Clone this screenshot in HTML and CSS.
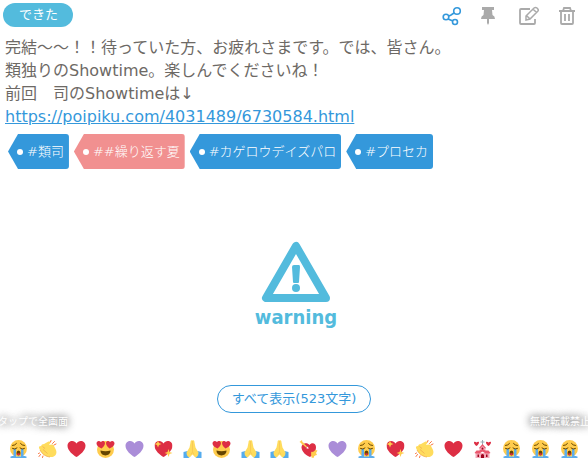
FILE: index.html
```
<!DOCTYPE html>
<html lang="ja">
<head>
    <meta charset="UTF-8">
    <meta name="viewport" content="width=device-width, initial-scale=1.0">
    <title>類独りのShowtime</title>
    <link rel="stylesheet" href="styles.css">
</head>
<body>
    <!-- Icon shapes -->
    <svg class="sprite" aria-hidden="true">
        <symbol id="cry" viewBox="0 0 36 36">
            <circle cx="18" cy="17" r="17" fill="#ffcc4d"/>
            <path d="M2 33h32v3H2zM8 18h5v17H2c0-3 3-3 6-3zM23 18h5v14c3 0 6 0 6 3H23z" fill="#5dadec"/>
            <ellipse cx="18" cy="26" rx="4" ry="5" fill="#664500"/>
            <path d="M14 28q4-3 8 0-4 5-8 0z" fill="#dd2e44"/>
            <path d="M6 17q5 3 9-1M30 17q-5 3-9-1M6 11q5 0 8-4M30 11q-5 0-8-4" fill="none" stroke="#664500" stroke-width="2" stroke-linecap="round"/>
        </symbol>
        <symbol id="clap" viewBox="0 0 36 36">
            <path d="M1 16q-1-4 4-4l2-3 4-1 9-5q4-1 4 2l-3 5 5-1q4-1 5 3l4 8c3 8-2 15-12 14C13 34 5 26 1 16z" fill="#ffdc5d"/>
            <path d="M3 20c5 9 12 13 20 14M9 19l9 8M8 13l5 4" stroke="#f0a850" stroke-width="1.500" fill="none"/>
            <path d="M24 4l1-3M28 7l4-4M31 10l4-2M2 26l-2 1M4 29l-3 4M9 32l-1 3" stroke="#fa743e" stroke-width="2" stroke-linecap="round"/>
        </symbol>
        <symbol id="heart" viewBox="0 0 36 36">
            <path d="M36 11.500C36 6 31.500 2 26.500 2 23 2 19.800 4 18 7 16.200 4 13 2 9.500 2 4.500 2 0 6 0 11.500 0 21 11 30 18 34c7-4 18-13 18-22.500z" fill="#dd2e44"/>
        </symbol>
        <symbol id="purple" viewBox="0 0 36 36">
            <path d="M36 11.500C36 6 31.500 2 26.500 2 23 2 19.800 4 18 7 16.200 4 13 2 9.500 2 4.500 2 0 6 0 11.500 0 21 11 30 18 34c7-4 18-13 18-22.500z" fill="#aa8dd8"/>
        </symbol>
        <symbol id="love" viewBox="0 0 36 36">
            <circle cx="18" cy="19" r="17" fill="#ffcc4d"/>
            <path d="M17 6c-1-5-6-5-8-2C5 0 0 2 0 7c0 4 5 8 10 10 4-3 7-7 7-11zM19 6c1-5 6-5 8-2 4-4 9-2 9 3 0 4-5 8-10 10-4-3-7-7-7-11z" fill="#dd2e44"/>
            <path d="M8 21q10 3 20 0c0 13-20 13-20 0z" fill="#664500"/>
        </symbol>
        <symbol id="sparkle" viewBox="0 0 36 36">
            <use href="#heart"/>
            <path d="M7 1l2 5 5 2-5 2-2 5-2-5-5-2 5-2zM28 18l2 6 6 2-6 2-2 6-2-6-6-2 6-2z" fill="#ffcc4d"/>
        </symbol>
        <symbol id="pray" viewBox="0 0 36 36">
            <path d="M0 24l8-2 6 10-4 4H0zM36 24l-8-2-6 10 4 4h10z" fill="#55acee"/>
            <path d="M18 1c-3-2-4 1-4 4l-2 10-6 10c0 5 2 9 6 10l6-6 6 6c4-1 6-5 6-10l-6-10-2-10c0-3-1-6-4-4z" fill="#ffdc5d"/>
            <path d="M18 2v22l-3 5M18 24l3 5" fill="none" stroke="#f9ca55" stroke-width="2"/>
        </symbol>
        <symbol id="arrow" viewBox="0 0 36 36">
            <path d="M33 14c0-8-9-10-13-4C15 3 4 7 4 15c1 9 9 16 17 19 7-5 12-12 12-20z" fill="#dd2e44"/>
            <path d="M3 4l11 10M24 24l7 7" stroke="#ffcc4d" stroke-width="3"/>
            <path d="M0 4l5-4 1 5 4 1-5 4-1-4zM23 27l9-7 4 1-3 5 2 4-5 1-2 5-4-1z" fill="#ffcc4d"/>
            <path d="M13 16l4-3 1 5z" fill="#fff"/>
        </symbol>
        <symbol id="church" viewBox="0 0 36 36">
            <path d="M17 0h2v3h3v2h-3v6h-2V5h-3V3h3z" fill="#99aab5"/>
            <path d="M12 16l6-6 6 6v7H12zM4 26h28v10H4z" fill="#f4abba"/>
            <path d="M11 16l7-8 7 8-2 1-5-5-5 5zM2 26l4-5h6l6-3 6 3h6l4 5-3 1h-7l-6-4-6 4H5z" fill="#ea596e"/>
            <path d="M15 36v-6q3-4 6 0v6zM8 29h3v5H8zM25 29h3v5h-3z" fill="#a0041e"/>
            <circle cx="18" cy="17" r="2" fill="#a0041e"/>
            <path d="M6 12C-3 5 2 1 6 5c4-4 9 0 0 7zM30 12c-9-7-4-11 0-7 4-4 9 0 0 7z" fill="#dd2e44"/>
        </symbol>
    </svg>

    <article class="item">
        <header class="item-header">
            <a class="category" href="#">できた</a>
            <div class="commands">
                <button type="button" class="share" aria-label="共有">
                    <svg width="20" height="20" viewBox="0 0 20 20" fill="none" stroke="currentColor" stroke-width="1.600">
                        <circle cx="4" cy="11" r="2.800"/><circle cx="15" cy="5" r="3.300"/><circle cx="13" cy="16" r="2.500"/>
                        <path d="M7 10l2-1 3-2M6 13l5 2"/>
                    </svg>
                </button>
                <button type="button" aria-label="固定">
                    <svg width="20" height="20" viewBox="1 0 20 20" fill="currentColor">
                        <path d="M3 1h12v3h-2l.5 5Q16 10 16 13h-6v4l-1 2-1-2v-4H2q0-3 2.500-4L5 4H3z"/>
                    </svg>
                </button>
                <button type="button" aria-label="編集">
                    <svg width="22" height="20" viewBox="0 0 22 20" fill="none" stroke="currentColor" stroke-width="1.800">
                        <path d="M12 3H3Q2 3 2 4v13q0 1 1 1h13q1 0 1-1v-4"/>
                        <path d="M8 10l8-8q1.500-1 3 0 2 2 1 3l-8 8-4 1zM15 3l4 4M9 10l3 3" stroke-width="1.500"/>
                    </svg>
                </button>
                <button type="button" aria-label="削除">
                    <svg width="18" height="20" viewBox="0 0 18 20" fill="none" stroke="currentColor" stroke-width="1.800">
                        <path d="M1 5h16M5 5l1-3h6l1 3M3 5v12q0 1 1 1h10q1 0 1-1V5M7 8v7M11 8v7"/>
                    </svg>
                </button>
            </div>
        </header>

        <p class="desc">
            完結～～！！待っていた方、お疲れさまです。では、皆さん。<br>
            類独りのShowtime。楽しんでくださいね！<br>
            前回　司のShowtimeは↓<br>
            <a href="https://poipiku.com/4031489/6730584.html">https://poipiku.com/4031489/6730584.html</a>
        </p>

        <nav class="tags">
            <a class="tag" href="#">#類司</a>
            <a class="tag pink" href="#">##繰り返す夏</a>
            <a class="tag" href="#">#カゲロウデイズパロ</a>
            <a class="tag" href="#">#プロセカ</a>
        </nav>

        <div class="thumb">
            <div class="warning">
                <svg width="72" height="64" viewBox="0 0 72 64">
                    <path d="M36 6L6 58h60z" fill="none" stroke="#53bbdd" stroke-width="8" stroke-linejoin="round"/>
                    <path d="M34 25h5q1 0 1 2l-1 15q0 1-1 1h-4q-1 0-1-1l-1-15q0-2 2-2z" fill="#53bbdd"/>
                    <circle cx="36" cy="48" r="4" fill="#53bbdd"/>
                </svg>
                <span>warning</span>
            </div>
            <button type="button" class="show-all">すべて表示(523文字)</button>
            <span class="note note-left">タップで全画面</span>
            <span class="note note-right">無断転載禁止</span>
        </div>

        <!-- Reactions -->
        <div class="reactions">
            <svg><use href="#cry"/></svg>
            <svg><use href="#clap"/></svg>
            <svg><use href="#heart"/></svg>
            <svg><use href="#love"/></svg>
            <svg><use href="#purple"/></svg>
            <svg><use href="#sparkle"/></svg>
            <svg><use href="#pray"/></svg>
            <svg><use href="#love"/></svg>
            <svg><use href="#pray"/></svg>
            <svg><use href="#pray"/></svg>
            <svg><use href="#arrow"/></svg>
            <svg><use href="#purple"/></svg>
            <svg><use href="#cry"/></svg>
            <svg><use href="#sparkle"/></svg>
            <svg><use href="#clap"/></svg>
            <svg><use href="#heart"/></svg>
            <svg><use href="#church"/></svg>
            <svg><use href="#cry"/></svg>
            <svg><use href="#cry"/></svg>
            <svg><use href="#cry"/></svg>
        </div>
    </article>
</body>
</html>
```
FILE: styles.css
```
body {
    margin: 0;
    background-color: #fff;
    color: #6d6965;
    font-family: "DejaVu Sans", "Noto Sans CJK JP", sans-serif;
    font-size: 16px;
}

button {
    font-family: inherit;
    background: none;
    border: none;
    padding: 0;
    cursor: pointer;
}

.sprite {
    display: none;
}

.item {
    overflow: hidden;
}

.item-header {
    display: flex;
    justify-content: space-between;
    align-items: flex-start;
    padding: 3px 12px 0 3px;
}

.category {
    padding: 0 15px 0 16px;
    border-radius: 12px;
    background-color: #53bbdd;
    color: #fff;
    font-size: 13px;
    line-height: 24px;
    text-decoration: none;
}

.commands {
    display: flex;
    gap: 18px;
    padding-top: 3px;
    color: #aaa;
}

.commands button {
    color: inherit;
}

.commands svg {
    display: block;
}

.commands .share {
    color: #3498db;
}

.desc {
    margin: 9px 5px 6px;
    line-height: 23px;
}

.desc a {
    color: #3498db;
}

.tags {
    display: flex;
    flex-wrap: wrap;
    gap: 5px;
    padding: 0 8px;
}

.tag {
    position: relative;
    padding: 0 5px 0 19px;
    border-radius: 3px;
    background-color: #3498db;
    clip-path: polygon(10px 0, 100% 0, 100% 100%, 10px 100%, 0 50%);
    color: #fff;
    font-size: 13px;
    font-weight: 300;
    line-height: 35px;
    text-decoration: none;
}

.tag::before {
    content: "";
    position: absolute;
    top: 15px;
    left: 9px;
    width: 6px;
    height: 6px;
    border-radius: 50%;
    background-color: #fff;
}

.tag.pink {
    background-color: #f19090;
}

.thumb {
    position: relative;
    display: flex;
    flex-direction: column;
    align-items: center;
    gap: 55px;
    padding: 71px 0 18px;
}

.warning {
    display: flex;
    flex-direction: column;
    align-items: center;
    padding-left: 4px;
    color: #53bbdd;
    font-family: "DejaVu Sans Condensed", "DejaVu Sans", sans-serif;
    font-size: 20px;
    font-weight: bold;
    line-height: 26px;
}

.show-all {
    padding: 0 14px;
    border: 1px solid #3498db;
    border-radius: 14px;
    color: #3498db;
    font-size: 13px;
    line-height: 26px;
}

.note {
    position: absolute;
    bottom: 1px;
    color: #fff;
    font-size: 10px;
    line-height: 16px;
    text-shadow: 0 0 8px #666, 0 0 8px #888;
    white-space: nowrap;
}

.note-left {
    left: -2px;
}

.note-right {
    right: -2px;
}

.reactions {
    display: flex;
    padding: 9px 4px 6px;
}

.reactions svg {
    flex: 1;
    min-width: 0;
    height: 18px;
}
```
